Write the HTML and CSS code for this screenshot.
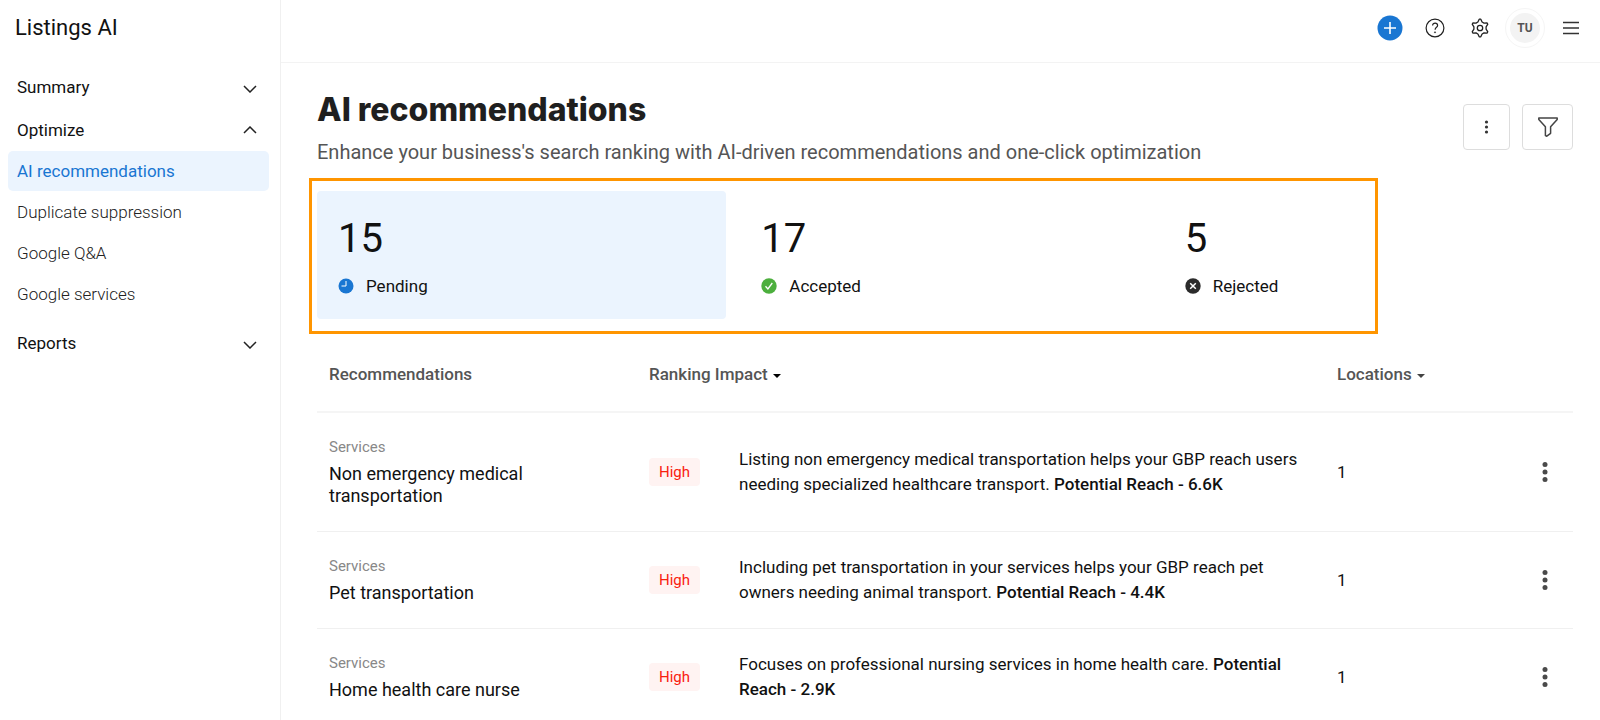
FILE: index.html
```html
<!DOCTYPE html>
<html lang="en">
<head>
    <meta charset="UTF-8">
    <title>Listings AI</title>
    <link rel="stylesheet" href="styles.css">
</head>
<body>
    <!-- left navigation -->
    <aside class="sidebar">
        <div class="app-name">Listings AI</div>
        <nav>
            <button type="button" class="group">Summary
                <svg class="down" width="14" height="8" viewBox="0 0 14 8"><path d="M1 1l6 6 6-6"/></svg>
            </button>
            <button type="button" class="group">Optimize
                <svg width="14" height="8" viewBox="0 0 14 8"><path d="M1 7l6-6 6 6"/></svg>
            </button>
            <ul class="links">
                <li><a href="#" class="active">AI recommendations</a></li>
                <li><a href="#">Duplicate suppression</a></li>
                <li><a href="#">Google Q&amp;A</a></li>
                <li><a href="#">Google services</a></li>
            </ul>
            <button type="button" class="group">Reports
                <svg class="down" width="14" height="8" viewBox="0 0 14 8"><path d="M1 1l6 6 6-6"/></svg>
            </button>
        </nav>
    </aside>

    <div class="page">
        <header class="topbar">
            <button type="button" class="icon" aria-label="Add">
                <svg width="26" height="26" viewBox="0 0 26 26"><circle cx="13" cy="13" r="12.5" fill="#1976d2"/><path d="M13 7v12M7 13h12" stroke="#fff" stroke-width="1.6"/></svg>
            </button>
            <button type="button" class="icon" aria-label="Help">
                <svg width="20" height="20" viewBox="0 0 20 20" fill="none" stroke="#212121" stroke-width="1.2"><circle cx="10" cy="10" r="8.9"/><path d="M7.6 7.6c0-1.5 1.1-2.5 2.5-2.5s2.5 1 2.5 2.3c0 1.9-2.5 2-2.5 4.3"/><circle cx="10" cy="14.3" r=".6" fill="#212121" stroke-width=".6"/></svg>
            </button>
            <button type="button" class="icon" aria-label="Settings">
                <svg width="20" height="20" viewBox="0 0 20 20" fill="none" stroke="#212121" stroke-width="1.3" stroke-linejoin="round"><path d="M9.200 1.200h1.600L12.100 4l1.900 1.100 3-.3.8 1.400L16.100 8.800v2.400l1.700 2.600-.8 1.400-3-.3-1.900 1.100-1.300 2.800H9.200L7.900 16 6 14.900l-3 .3-.8-1.400 1.700-2.600V8.800L2.200 6.200 3 4.800l3 .3L7.900 4z"/><circle cx="10" cy="10" r="2.700"/></svg>
            </button>
            <button type="button" class="avatar">TU</button>
            <button type="button" class="icon" aria-label="Menu">
                <svg width="18" height="14" viewBox="0 0 18 14"><path d="M1 1.500h16M1 7h16M1 12.500h16" stroke="#333" stroke-width="1.700"/></svg>
            </button>
        </header>

        <main>
            <div class="heading">
                <div>
                    <h1>AI recommendations</h1>
                    <p>Enhance your business's search ranking with AI-driven recommendations and one-click optimization</p>
                </div>
                <div class="actions">
                    <button type="button" aria-label="More">
                        <svg width="5" height="16" viewBox="0 0 5 16" fill="#333"><circle cx="2.500" cy="3" r="1.600"/><circle cx="2.500" cy="8" r="1.600"/><circle cx="2.500" cy="13" r="1.600"/></svg>
                    </button>
                    <button type="button" class="filter" aria-label="Filter">
                        <svg width="20" height="20" viewBox="0 0 20 20" fill="none" stroke="#444" stroke-width="1.500" stroke-linejoin="round"><path d="M.8.900h18.400v1.500L12.600 9.800v6.500L8.800 19.200l-1.400-.6V9.800L.8 2.400z"/></svg>
                    </button>
                </div>
            </div>

            <!-- totals by status -->
            <div class="stats">
                <button type="button" class="stat selected">
                    <span class="count">15</span>
                    <span class="status">
                        <svg width="16" height="16" viewBox="0 0 16 16"><circle cx="8" cy="8" r="7.500" fill="#1976d2"/><path d="M8 3v5H3.500" fill="none" stroke="#fff"/></svg>
                        Pending
                    </span>
                </button>
                <button type="button" class="stat">
                    <span class="count">17</span>
                    <span class="status">
                        <svg width="16" height="16" viewBox="0 0 16 16"><circle cx="8" cy="8" r="7.700" fill="#4caf3d"/><path d="M4.500 8.300l2.400 2.700 4.400-6" fill="none" stroke="#fff" stroke-width="1.300"/></svg>
                        Accepted
                    </span>
                </button>
                <button type="button" class="stat">
                    <span class="count">5</span>
                    <span class="status">
                        <svg width="16" height="16" viewBox="0 0 16 16"><circle cx="8" cy="8" r="7.700" fill="#2b2b2b"/><path d="M5.200 5.200l5.600 5.600M10.800 5.200l-5.600 5.600" stroke="#fff" stroke-width="1.500"/></svg>
                        Rejected
                    </span>
                </button>
                <div class="highlight"></div>
            </div>

            <table>
                <colgroup>
                    <col class="col-name">
                    <col class="col-impact">
                    <col>
                    <col class="col-locations">
                    <col class="col-menu">
                </colgroup>
                <thead>
                    <tr>
                        <th>Recommendations</th>
                        <th colspan="2"><button type="button" class="sort sorted">Ranking Impact</button></th>
                        <th><button type="button" class="sort">Locations</button></th>
                        <th></th>
                    </tr>
                </thead>
                <tbody>
                    <tr>
                        <td><div class="type">Services</div><div class="name">Non emergency medical transportation</div></td>
                        <td><span class="badge">High</span></td>
                        <td class="reason">Listing non emergency medical transportation helps your GBP reach users needing specialized healthcare transport. <b>Potential Reach - 6.6K</b></td>
                        <td>1</td>
                        <td><button type="button" class="icon" aria-label="Row menu"><svg width="6" height="20" viewBox="0 0 6 20" fill="#4a4a4a"><circle cx="3" cy="2.600" r="2.500"/><circle cx="3" cy="10" r="2.500"/><circle cx="3" cy="17.400" r="2.500"/></svg></button></td>
                    </tr>
                    <tr>
                        <td><div class="type">Services</div><div class="name">Pet transportation</div></td>
                        <td><span class="badge">High</span></td>
                        <td class="reason">Including pet transportation in your services helps your GBP reach pet owners needing animal transport. <b>Potential Reach - 4.4K</b></td>
                        <td>1</td>
                        <td><button type="button" class="icon" aria-label="Row menu"><svg width="6" height="20" viewBox="0 0 6 20" fill="#4a4a4a"><circle cx="3" cy="2.600" r="2.500"/><circle cx="3" cy="10" r="2.500"/><circle cx="3" cy="17.400" r="2.500"/></svg></button></td>
                    </tr>
                    <tr>
                        <td><div class="type">Services</div><div class="name">Home health care nurse</div></td>
                        <td><span class="badge">High</span></td>
                        <td class="reason">Focuses on professional nursing services in home health care. <b>Potential Reach - 2.9K</b></td>
                        <td>1</td>
                        <td><button type="button" class="icon" aria-label="Row menu"><svg width="6" height="20" viewBox="0 0 6 20" fill="#4a4a4a"><circle cx="3" cy="2.600" r="2.500"/><circle cx="3" cy="10" r="2.500"/><circle cx="3" cy="17.400" r="2.500"/></svg></button></td>
                    </tr>
                </tbody>
            </table>
        </main>
    </div>
</body>
</html>
```
FILE: styles.css
```css
* {
    box-sizing: border-box;
}
body {
    margin: 0;
    display: flex;
    min-height: 100vh;
    background: #fff;
    color: #111;
    font-family: Roboto, sans-serif;
    font-size: 17px;
}
button {
    margin: 0;
    padding: 0;
    border: 0;
    background: none;
    color: inherit;
    font: inherit;
    text-align: left;
    cursor: pointer;
}
svg {
    display: block;
}

/* sidebar */
.sidebar {
    flex: none;
    width: 281px;
    padding: 0 11px 0 8px;
    border-right: 1px solid #f0f0f0;
}
.app-name {
    height: 65px;
    padding-left: 7px;
    font-size: 22px;
    line-height: 56px;
}
.group {
    display: flex;
    justify-content: space-between;
    align-items: center;
    width: 100%;
    height: 43px;
    padding: 0 12px 0 9px;
}
.group svg {
    fill: none;
    stroke: #222;
    stroke-width: 1.5;
}
.group .down {
    margin-top: 4px;
}
.links {
    display: flex;
    flex-direction: column;
    gap: 1px;
    margin: 0 0 7px;
    padding: 0;
    list-style: none;
}
.links a {
    display: block;
    padding: 0 9px;
    border-radius: 5px;
    color: #222;
    font-weight: 300;
    line-height: 40px;
    text-decoration: none;
}
.links .active {
    background: #ebf4fe;
    color: #1976d2;
    font-weight: 400;
}

/* top bar */
.page {
    flex: 1;
    min-width: 0;
}
.topbar {
    display: flex;
    justify-content: flex-end;
    align-items: center;
    height: 63px;
    padding: 0 20px 6px;
    border-bottom: 1px solid #f3f3f3;
}
.topbar .icon {
    margin-right: 25px;
}
.topbar .icon:first-child {
    margin-right: 22px;
}
.topbar .icon:last-child {
    margin-right: 0;
}
.avatar {
    width: 38px;
    height: 38px;
    margin: 0 18px 0 -9px;
    border: 4px solid #fff;
    border-radius: 50%;
    outline: 1px solid #f5f5f5;
    background: #f3f3f3;
    color: #555;
    font-size: 12px;
    font-weight: 700;
    text-align: center;
}

/* main area */
main {
    padding: 27px 27px 0 36px;
}
.heading {
    display: flex;
    justify-content: space-between;
    align-items: flex-start;
    height: 101px;
}
h1 {
    margin: 0;
    color: #1f1f1f;
    font-family: Inter, sans-serif;
    font-size: 32px;
    font-weight: 800;
    line-height: 40px;
}
.heading p {
    margin: 8px 0 0;
    color: #555;
    font-size: 20px;
    line-height: 28px;
}
.actions {
    display: flex;
    gap: 12px;
    padding-top: 14px;
}
.actions button {
    display: flex;
    justify-content: center;
    align-items: center;
    width: 47px;
    height: 46px;
    border: 1px solid #ddd;
    border-radius: 4px;
}
.actions .filter {
    width: 51px;
}

.stats {
    position: relative;
    display: grid;
    grid-template-columns: repeat(3, 1fr);
    gap: 14px;
}
.stat {
    height: 128px;
    padding: 22px 21px;
    border-radius: 4px;
}
.selected {
    background: #ebf4fe;
}
.count {
    display: block;
    font-size: 40px;
    line-height: 52px;
}
.status {
    display: flex;
    align-items: center;
    gap: 12px;
    margin-top: 9px;
    line-height: 24px;
}
.highlight {
    position: absolute;
    top: -13px;
    right: 195px;
    bottom: -15px;
    left: -8px;
    border: 3px solid #ff9500;
    pointer-events: none;
}

/* recommendations table */
table {
    width: 100%;
    margin-top: 18px;
    border-collapse: collapse;
    table-layout: fixed;
}
.col-name {
    width: 320px;
}
.col-impact {
    width: 90px;
}
.col-locations {
    width: 192px;
}
.col-menu {
    width: 56px;
}
th {
    height: 75px;
    padding: 0 12px;
    border-bottom: 2px solid #f5f5f5;
    color: #555;
    font-weight: 500;
    text-align: left;
}
.sort::after {
    content: "";
    display: inline-block;
    margin-left: 5px;
    border: 4px solid transparent;
    border-top-color: #444;
    border-bottom: 0;
    vertical-align: middle;
}
.sorted::after {
    border-top-color: #000;
}
td {
    padding: 24px 12px;
    border-bottom: 1px solid #f0f0f0;
}
.type {
    margin-bottom: 6px;
    color: #888;
    font-size: 15px;
    line-height: 20px;
}
.name {
    font-size: 18px;
    line-height: 22px;
}
.reason {
    padding-top: 0;
    padding-bottom: 0;
    line-height: 25px;
}
.reason b {
    font-weight: 500;
}
.badge {
    display: inline-block;
    padding: 0 10px;
    border-radius: 4px;
    background: #fff3f2;
    color: #f9200f;
    font-size: 15px;
    line-height: 28px;
}
td .icon {
    display: block;
    margin: 0 auto;
}
```
